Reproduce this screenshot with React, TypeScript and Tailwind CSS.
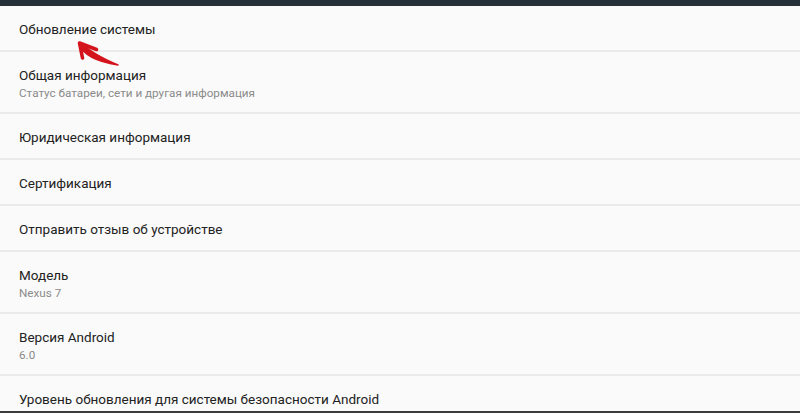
import React from "react";

type Item = { title: string; sub?: string };

const items: Item[] = [
  { title: "Обновление системы" },
  { title: "Общая информация", sub: "Статус батареи, сети и другая информация" },
  { title: "Юридическая информация" },
  { title: "Сертификация" },
  { title: "Отправить отзыв об устройстве" },
  { title: "Модель", sub: "Nexus 7" },
  { title: "Версия Android", sub: "6.0" },
  { title: "Уровень обновления для системы безопасности Android", sub: "1 декабря 2015 г." },
];

function Row({ item }: { item: Item }) {
  if (item.sub) {
    return (
      <div className="pl-[19px] pt-[13px] pb-[11px] border-b-2 border-[#ebebeb] shrink-0">
        <div className="text-[13.5px] leading-[20px] text-[#222222]">{item.title}</div>
        <div className="text-[11.7px] leading-[16px] text-[#8a8a8a]">{item.sub}</div>
      </div>
    );
  }
  return (
    <div className="pl-[19px] pt-[13px] pb-[11px] border-b-2 border-[#ebebeb] shrink-0">
      <div className="text-[13.5px] leading-[20px] text-[#222222]">{item.title}</div>
    </div>
  );
}

export default function App() {
  return (
    <div
      className="relative w-[800px] h-[413px] bg-[#fafafa] flex flex-col overflow-hidden"
      style={{ fontFamily: "Roboto, 'Noto Sans', sans-serif" }}
    >
      <div className="h-[6px] bg-[#263038] shrink-0" />
      <div className="flex-1 flex flex-col overflow-hidden">
        {items.map((it) => (
          <Row key={it.title} item={it} />
        ))}
      </div>
      <div className="h-[2px] bg-[#3c3c3c] shrink-0" />
      <svg
        className="absolute left-0 top-0 pointer-events-none"
        width="800"
        height="413"
        viewBox="0 0 800 413"
      >
        <path
          d="M79 44 Q85 60 118 65 Q92 54 83 44 Z"
          fill="#d4141c"
          stroke="#d4141c"
          strokeWidth="1.5"
          strokeLinejoin="round"
        />
        <path
          d="M79.5 43 L96.5 49.5 M79.5 43 L82.5 58"
          stroke="#d4141c"
          strokeWidth="3.6"
          strokeLinecap="round"
          fill="none"
        />
      </svg>
    </div>
  );
}
